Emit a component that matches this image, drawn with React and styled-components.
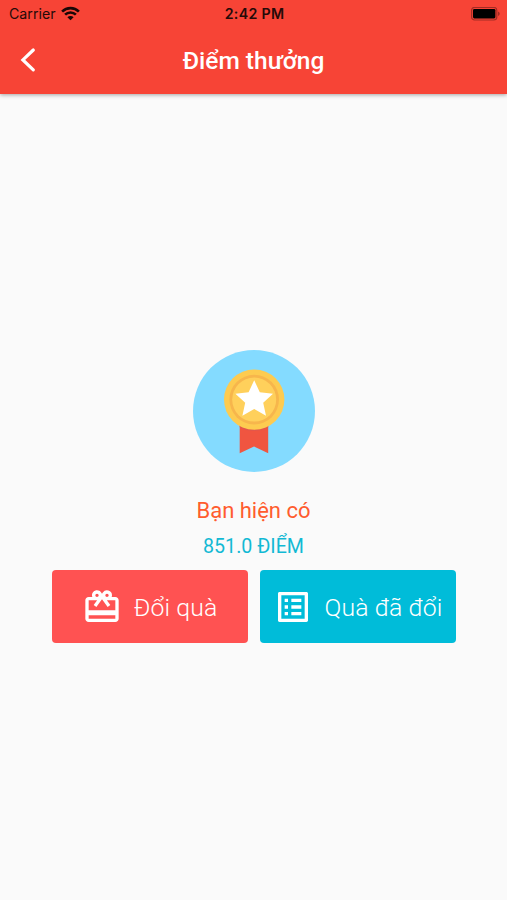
import styled, { createGlobalStyle } from "styled-components";
import { MdListAlt, MdRedeem } from "react-icons/md";

export default function App() {
	return (
		<Screen>
			<GlobalStyle />
			<Header>
				<StatusBar>
					<Carrier>
						<span>Carrier</span>
						<WifiIcon />
					</Carrier>
					<Clock>2:42 PM</Clock>
					<BatteryIcon />
				</StatusBar>
				<NavBar>
					<BackButton aria-label="Back">
						<ChevronIcon />
					</BackButton>
					<Title>Điểm thưởng</Title>
				</NavBar>
			</Header>
			<Content>
				<Medal />
				<Caption>Bạn hiện có</Caption>
				<Points>851.0 ĐIỂM</Points>
				<Actions>
					<ActionButton $color="#ff5252">
						<MdRedeem size={40} />
						<span>Đổi quà</span>
					</ActionButton>
					<ActionButton $color="#00bcd9">
						<MdListAlt size={40} />
						<span>Quà đã đổi</span>
					</ActionButton>
				</Actions>
			</Content>
		</Screen>
	);
}

function ChevronIcon() {
	return (
		<svg width="16" height="26" viewBox="0 0 16 26">
			<path
				d="M13.3 3L2.9 12.9 13.3 22.9"
				fill="none"
				stroke="#fff"
				strokeWidth="3.2"
				strokeLinecap="round"
			/>
		</svg>
	);
}

function WifiIcon() {
	return (
		<svg width="19" height="15" viewBox="0 0 19 15">
			<g fill="none" stroke="#190706" strokeWidth="2.6">
				<path d="M1.1 5.6a11.9 11.9 0 0 1 16.8 0" />
				<path d="M4.1 8.7a7.6 7.6 0 0 1 10.8 0" />
			</g>
			<path d="M6.4 11.2a4.4 4.4 0 0 1 6.2 0L9.5 14.3z" fill="#190706" />
		</svg>
	);
}

function BatteryIcon() {
	return (
		<svg width="30" height="14" viewBox="0 0 30 14">
			<rect x="0.6" y="0.4" width="25.2" height="12.6" rx="3" fill="none" stroke="#a32c24" strokeWidth="1.2" />
			<rect x="2" y="1.9" width="22.4" height="9.6" rx="1.4" fill="#000" />
			<path d="M27 4.6c2.3.8 2.3 3.6 0 4.4z" fill="#a32c24" />
		</svg>
	);
}

function Medal() {
	return (
		<svg width="122" height="122" viewBox="0 0 122 122">
			<circle cx="61" cy="61" r="61" fill="#84dbff" />
			<path d="M46.7 70h28.5v33.2L61 96.4l-14.3 6.8z" fill="#f05540" />
			<path d="M46.7 70h28.5v7.2a30 30 0 0 1-28.5 0z" fill="#e2574c" />
			<circle cx="61.2" cy="49.6" r="30.2" fill="#fdcb50" />
			<circle cx="61.2" cy="49.6" r="24.8" fill="#f7b64c" />
			<circle cx="61.2" cy="49.6" r="22" fill="#ffd05b" />
			<path
				d="M61.2 30.2l5.6 12.1 13.2 1.4-9.8 9 2.8 13.1-11.8-6.8-11.8 6.8 2.8-13.1-9.8-9 13.2-1.4z"
				fill="#fff"
			/>
		</svg>
	);
}

const GlobalStyle = createGlobalStyle`
	* {
		box-sizing: border-box;
	}

	body {
		margin: 0;
		background: #fafafa;
		font-family: Roboto, "Liberation Sans", sans-serif;
	}
`;

const Screen = styled.div`
	height: 900px;
	display: flex;
	flex-direction: column;
`;

const Header = styled.header`
	height: 94px;
	flex: none;
	background: #f74436;
	box-shadow: 0 1px 4px rgba(0, 0, 0, 0.35);
`;

const StatusBar = styled.div`
	height: 27px;
	padding: 0 6px 0 9px;
	display: grid;
	grid-template-columns: 1fr auto 1fr;
	align-items: center;
	color: #250a08;
	font-family: Inter, sans-serif;
	font-size: 14.2px;

	> svg {
		justify-self: end;
	}
`;

const Carrier = styled.div`
	display: flex;
	align-items: center;
	gap: 5px;
`;

const Clock = styled.span`
	padding-right: 1px;
	font-weight: 600;
	letter-spacing: 0.3px;
`;

const NavBar = styled.div`
	height: 67px;
	padding: 0 20px;
	display: grid;
	grid-template-columns: 1fr auto 1fr;
	align-items: center;
	color: #fff;
`;

const BackButton = styled.button`
	width: 29px;
	padding: 0 0 2px;
	border: none;
	background: none;

	svg {
		display: block;
	}
`;

const Title = styled.h1`
	margin: 0;
	font-size: 24.5px;
	font-weight: 500;
`;

const Content = styled.main`
	flex: 1;
	padding-bottom: 2px;
	display: flex;
	flex-direction: column;
	align-items: center;
	justify-content: center;
`;

const Caption = styled.p`
	margin: 25px 0 0;
	color: #ff5c2e;
	font-size: 22px;
	line-height: 28px;
`;

const Points = styled.p`
	margin: 9px 0 0;
	color: #12b9d4;
	font-size: 19.6px;
	line-height: 26px;
`;

const Actions = styled.div`
	margin-top: 10px;
	display: flex;
	gap: 12px;
`;

const ActionButton = styled.button`
	width: 196px;
	height: 73px;
	padding: 2px 0 0;
	border: none;
	border-radius: 4px;
	background: ${(props) => props.$color};
	color: #fff;
	display: flex;
	align-items: center;
	justify-content: center;
	gap: 12px;
	font-family: inherit;
	font-size: 24.8px;
	font-weight: 300;
	letter-spacing: 0.1px;
	white-space: nowrap;
`;
